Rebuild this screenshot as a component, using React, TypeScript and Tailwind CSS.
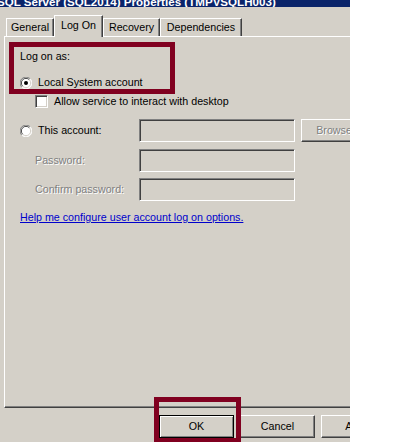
import React from "react";

const font = { fontFamily: '"Liberation Sans", Arial, sans-serif' };

function Radio({ checked }: { checked?: boolean }) {
  return (
    <svg width="12" height="12" viewBox="0 0 12 12" className="shrink-0">
      <circle cx="6" cy="6" r="5.5" fill="#ffffff" />
      <path d="M10.2 1.8 A5.8 5.8 0 0 0 1.8 10.2" fill="none" stroke="#808080" strokeWidth="1" />
      <path d="M9.3 2.7 A4.6 4.6 0 0 0 2.7 9.3" fill="none" stroke="#404040" strokeWidth="1" />
      <path d="M1.8 10.2 A5.8 5.8 0 0 0 10.2 1.8" fill="none" stroke="#ffffff" strokeWidth="1" />
      <path d="M2.7 9.3 A4.6 4.6 0 0 0 9.3 2.7" fill="none" stroke="#d4d0c8" strokeWidth="1" />
      {checked && <circle cx="6" cy="6" r="2" fill="#000000" />}
    </svg>
  );
}

function Checkbox() {
  return (
    <div className="w-[13px] h-[13px] shrink-0 bg-white border border-t-[#808080] border-l-[#808080] border-b-white border-r-white shadow-[inset_1px_1px_0_#404040,inset_-1px_-1px_0_#d4d0c8]" />
  );
}

function TextBox() {
  return (
    <div className="w-[156px] h-[23px] shrink-0 bg-[#d4d0c8] border border-t-[#808080] border-l-[#808080] border-b-white border-r-white shadow-[inset_1px_1px_0_#404040,inset_-1px_-1px_0_#d4d0c8]" />
  );
}

function Disabled({ children }: { children: React.ReactNode }) {
  return <span className="text-[#808080] [text-shadow:1px_1px_0_#ffffff] whitespace-nowrap">{children}</span>;
}

function Tab({ label, w, selected }: { label: string; w: string; selected?: boolean }) {
  if (selected) {
    return (
      <div
        className={`${w} h-[22px] shrink-0 relative z-10 mb-[-1px] bg-[#d4d0c8] border-t border-l border-white border-r border-r-[#404040] shadow-[inset_-1px_0_0_#808080] flex items-start justify-center pt-[3px]`}
      >
        <span className="leading-[13px] whitespace-nowrap">{label}</span>
      </div>
    );
  }
  return (
    <div
      className={`${w} h-[18px] shrink-0 bg-[#d4d0c8] border-t border-l border-white border-r border-r-[#404040] shadow-[inset_-1px_0_0_#808080] flex items-start justify-center pt-[2px]`}
    >
      <span className="leading-[13px] whitespace-nowrap">{label}</span>
    </div>
  );
}

export default function App() {
  return (
    <div className="w-[410px] h-[442px] bg-white relative overflow-hidden text-[10.7px] text-black" style={font}>
      <div className="w-[350px] h-[442px] bg-[#d4d0c8] flex flex-col overflow-hidden">
        {/* title bar */}
        <div className="h-[7px] bg-[#0a246a] overflow-hidden shrink-0">
          <div className="mt-[-5px] ml-[-3px] text-white font-bold text-[11.6px] leading-[13px] whitespace-nowrap">
            SQL Server (SQL2014) Properties (TMPVSQLH003)
          </div>
        </div>
        {/* tabs */}
        <div className="h-[29px] flex items-end pl-[6px] shrink-0">
          <Tab label="General" w="w-[48px]" />
          <Tab label="Log On" w="w-[49px]" selected />
          <Tab label="Recovery" w="w-[57px]" />
          <Tab label="Dependencies" w="w-[82px]" />
        </div>
        {/* panel */}
        <div className="ml-[4px] w-[400px] h-[372px] shrink-0 border-t border-l border-white border-b border-b-[#404040] shadow-[inset_0_-1px_0_#808080] flex flex-col pl-[15px]">
          <div className="mt-[13px] h-[13px] leading-[13px]">Log on as:</div>
          <div className="mt-[13px] h-[13px] flex items-center gap-[6px]">
            <Radio checked />
            <span className="leading-[13px] whitespace-nowrap">Local System account</span>
          </div>
          <div className="mt-[6px] h-[13px] flex items-center gap-[6px] pl-[15px]">
            <Checkbox />
            <span className="leading-[13px] whitespace-nowrap">Allow service to interact with desktop</span>
          </div>
          <div className="mt-[11px] h-[23px] flex items-center">
            <div className="w-[119px] shrink-0 flex items-center gap-[6px]">
              <Radio />
              <span className="leading-[13px] whitespace-nowrap">This account:</span>
            </div>
            <TextBox />
            <div className="ml-[6px] w-[75px] h-[23px] shrink-0 border border-t-white border-l-white border-b-[#404040] border-r-[#404040] shadow-[inset_-1px_-1px_0_#808080] flex items-center justify-center">
              <Disabled>Browse...</Disabled>
            </div>
          </div>
          <div className="mt-[7px] h-[23px] flex items-center">
            <div className="w-[119px] shrink-0 pl-[15px]">
              <Disabled>Password:</Disabled>
            </div>
            <TextBox />
          </div>
          <div className="mt-[6px] h-[23px] flex items-center">
            <div className="w-[119px] shrink-0 pl-[15px]">
              <Disabled>Confirm password:</Disabled>
            </div>
            <TextBox />
          </div>
          <div className="mt-[10px] h-[14px] leading-[13px] text-[#0000cc] underline whitespace-nowrap">
            Help me configure user account log on options.
          </div>
        </div>
        {/* buttons */}
        <div className="mt-[7px] flex gap-[6px] pl-[159px] shrink-0">
          <div className="w-[75px] h-[23px] shrink-0 border border-black shadow-[inset_1px_1px_0_#ffffff,inset_-1px_-1px_0_#808080] flex items-center justify-center">
            OK
          </div>
          <div className="w-[75px] h-[23px] shrink-0 border border-t-white border-l-white border-b-[#404040] border-r-[#404040] shadow-[inset_-1px_-1px_0_#808080] flex items-center justify-center">
            Cancel
          </div>
          <div className="w-[75px] h-[23px] shrink-0 border border-t-white border-l-white border-b-[#404040] border-r-[#404040] shadow-[inset_-1px_-1px_0_#808080] flex items-center justify-center">
            Apply
          </div>
        </div>
      </div>
      {/* annotation frames */}
      <div className="absolute left-[9px] top-[42px] w-[166px] h-[52px] border-[5px] border-[#800020]" />
      <div className="absolute left-[154px] top-[397px] w-[87px] h-[46px] border-[5px] border-[#800020]" />
    </div>
  );
}
